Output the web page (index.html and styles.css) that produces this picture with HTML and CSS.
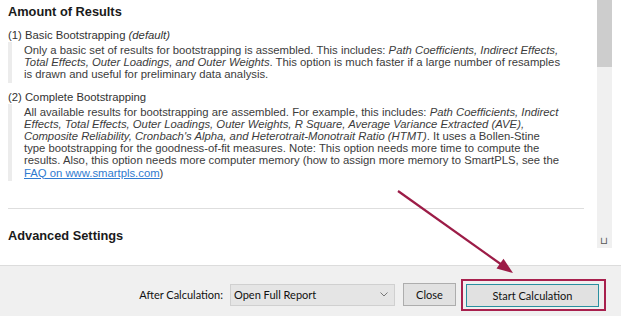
FILE: index.html
```html
<!DOCTYPE html>
<html>
<head>
<meta charset="utf-8">
<link rel="stylesheet" href="styles.css">
</head>
<body>
<div class="window">
  <div class="main">
    <div class="doc">
      <h2 class="title">Amount of Results</h2>
      <p class="opt">(1) Basic Bootstrapping <i>(default)</i></p>
      <div class="quote q1">
        Only a basic set of results for bootstrapping is assembled. This includes: <i>Path Coefficients, Indirect Effects,</i><br>
        <i>Total Effects, Outer Loadings, and Outer Weights</i>. This option is much faster if a large number of resamples<br>
        is drawn and useful for preliminary data analysis.
      </div>
      <p class="opt opt2">(2) Complete Bootstrapping</p>
      <div class="quote q2">
        All available results for bootstrapping are assembled. For example, this includes: <i>Path Coefficients, Indirect</i><br>
        <i>Effects, Total Effects, Outer Loadings, Outer Weights, R Square, Average Variance Extracted (AVE),</i><br>
        <i>Composite Reliability, Cronbach's Alpha, and Heterotrait-Monotrait Ratio (HTMT)</i>. It uses a Bollen-Stine<br>
        type bootstrapping for the goodness-of-fit measures. Note: This option needs more time to compute the<br>
        results. Also, this option needs more computer memory (how to assign more memory to SmartPLS, see the<br>
        <a href="#">FAQ on www.smartpls.com</a>)
      </div>
      <div class="rule"></div>
      <h2 class="title title2">Advanced Settings</h2>
    </div>
    <div class="scrollbar">
      <div class="thumb"></div>
      <div class="track"></div>
      <span class="grip">&#x2294;</span>
    </div>
    <div class="gutter"></div>
  </div>
  <div class="footer">
    <span class="label">After Calculation:</span>
    <div class="select">
      <span>Open Full Report</span>
      <svg class="chev" width="8" height="5" viewBox="0 0 8 5"><path d="M0.5 0.5 L4 4 L7.5 0.5" fill="none" stroke="#777" stroke-width="1"/></svg>
    </div>
    <div class="btn close">Close</div>
    <div class="hl">
      <div class="btn start">Start Calculation</div>
    </div>
  </div>
  <svg class="arrow" width="621" height="316" viewBox="0 0 621 316">
    <line x1="398" y1="191" x2="502" y2="265" stroke="#9c1c47" stroke-width="2.2"/>
    <path d="M513 273 L496.5 268.6 L503.5 258.8 Z" fill="#9c1c47"/>
  </svg>
</div>
</body>
</html>
```

FILE: styles.css
```css
* { box-sizing: border-box; }
html, body { margin: 0; padding: 0; background: #fff; }
body { width: 621px; height: 316px; overflow: hidden; }
.window { position: relative; width: 621px; height: 316px; display: flex; flex-direction: column; }
.main { height: 266px; display: flex; border-bottom: 1px solid #dcdcdc; }
.doc { flex: 1; padding: 3px 13px 0 8px; font-family: "Liberation Sans", Arial, sans-serif; color: #3c3c3c; }
.title { margin: 0; font-size: 12.8px; font-weight: bold; color: #1a1a1a; line-height: 18px; }
.title2 { margin-top: 18px; }
.opt { margin: 7px 0 0; font-size: 11.3px; line-height: 14px; color: #333; }
.opt2 { margin-top: 7px; }
.quote { margin: 0; border-left: 4px solid #ececec; padding: 2px 0 2px 12px; font-size: 11.3px; line-height: 12.2px; color: #3c3c3c; }
.quote a { color: #2f7bd0; text-decoration: underline; }
.rule { height: 1px; background: #dedede; margin-top: 27px; }
.scrollbar { width: 15px; height: 248px; display: flex; flex-direction: column; background: #f0f0f0; position: relative; }
.thumb { height: 67px; background: #cdcdcd; }
.track { flex: 1; }
.grip { position: absolute; left: 3px; bottom: 2px; font-size: 10px; line-height: 10px; color: #555; font-family: "DejaVu Sans", sans-serif; }
.gutter { width: 9px; }
.footer { flex: 1; background: #f0f0f0; display: flex; align-items: center; padding-top: 7px; font-family: Lato, "Open Sans", sans-serif; font-size: 11px; color: #111; white-space: nowrap; }
.label { margin-left: 120px; width: 103px; text-align: right; margin-right: 7px; }
.select { width: 165px; height: 22px; background: #e5e5e5; border: 1px solid #d0d0d0; display: flex; align-items: center; justify-content: space-between; padding: 0 6px 0 3px; }
.btn { height: 23px; background: #e1e1e1; border: 1px solid #adadad; display: flex; align-items: center; justify-content: center; }
.close { width: 53px; margin-left: 8px; }
.hl { margin-left: 5px; border: 2px solid #a8204d; padding: 3px 5px 2px 3px; }
.start { width: 133px; border-color: #2a8fa0; }
.arrow { position: absolute; left: 0; top: 0; pointer-events: none; }
```
